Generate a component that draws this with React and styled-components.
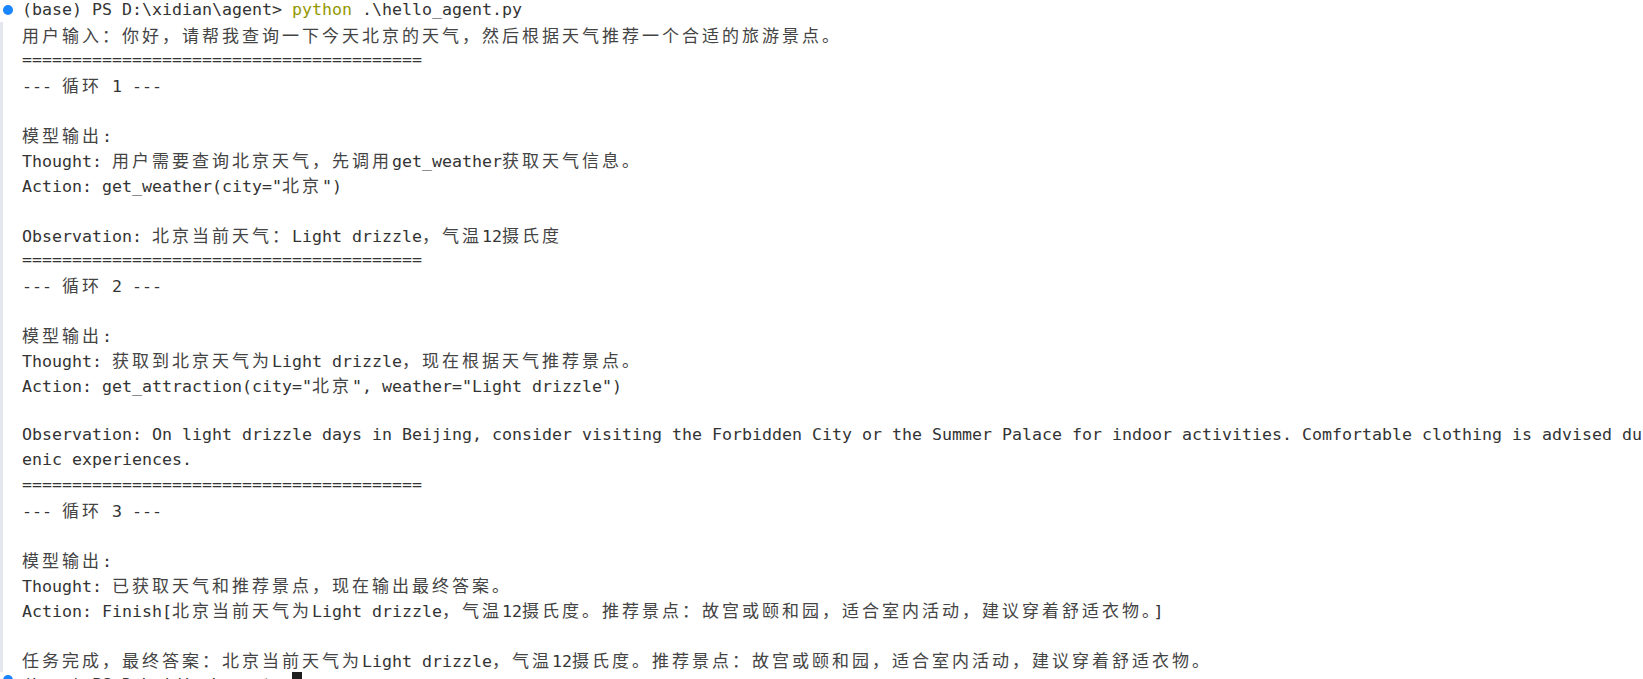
import React from 'react';
import styled, { createGlobalStyle } from 'styled-components';

// terminal output of a VS Code (light theme) session

const GlobalStyle = createGlobalStyle`
  html, body {
    margin: 0;
    padding: 0;
    background: #ffffff;
    overflow: hidden;
  }
`;

const Screen = styled.div`
  width: 1643px;
  height: 679px;
  overflow: hidden;
  background: #ffffff;
  color: #333333;
  font-family: "DejaVu Sans Mono", "Liberation Mono", monospace;
  font-size: 16.61px;
`;

const Buffer = styled.div`
  display: flex;
  flex-direction: column;
  margin-top: -3px;
`;

const Row = styled.div`
  display: flex;
  height: 25px;
  line-height: 25px;
  white-space: pre;
`;

const Gutter = styled.div`
  flex: 0 0 22px;
  box-sizing: border-box;
  display: flex;
  align-items: ${(p) => (p.$low ? 'flex-start' : 'center')};
  border-left: 3px solid ${(p) => (p.$bar ? '#e6e6ee' : 'transparent')};
`;

const Dot = styled.span`
  width: 10px;
  height: 10px;
  border-radius: 50%;
  background: #1a85ff;
  margin-top: ${(p) => (p.$low ? '3px' : '0')};
`;

const Text = styled.div`
  flex: 1;
  overflow: hidden;
`;

const Wide = styled.span`
  font-family: "Noto Sans CJK SC", sans-serif;
  font-size: 17px;
  letter-spacing: 3px;
  color: #444444;
`;

const Cmd = styled.span`
  color: #949800;
`;

const Cursor = styled.span`
  display: inline-block;
  width: 10px;
  height: 25px;
  vertical-align: top;
  background: #1f1f1f;
`;

const CJK = /([\u3000-\u303f\u3400-\u9fff\uff00-\uffef]+)/;

const mixed = (s) =>
  s.split(CJK).map((part, i) =>
    CJK.test(part) ? <Wide key={i}>{part}</Wide> : part
  );

const PROMPT = '(base) PS D:\\xidian\\agent> ';
const RULE = '='.repeat(40);

const lines = [
  '用户输入：你好，请帮我查询一下今天北京的天气，然后根据天气推荐一个合适的旅游景点。',
  RULE,
  '--- 循环 1 ---',
  '',
  '模型输出:',
  'Thought: 用户需要查询北京天气，先调用get_weather获取天气信息。',
  'Action: get_weather(city="北京")',
  '',
  'Observation: 北京当前天气：Light drizzle，气温12摄氏度',
  RULE,
  '--- 循环 2 ---',
  '',
  '模型输出:',
  'Thought: 获取到北京天气为Light drizzle，现在根据天气推荐景点。',
  'Action: get_attraction(city="北京", weather="Light drizzle")',
  '',
  'Observation: On light drizzle days in Beijing, consider visiting the Forbidden City or the Summer Palace for indoor activities. Comfortable clothing is advised during sc',
  'enic experiences.',
  RULE,
  '--- 循环 3 ---',
  '',
  '模型输出:',
  'Thought: 已获取天气和推荐景点，现在输出最终答案。',
  'Action: Finish[北京当前天气为Light drizzle，气温12摄氏度。推荐景点：故宫或颐和园，适合室内活动，建议穿着舒适衣物。]',
  '',
  '任务完成，最终答案：北京当前天气为Light drizzle，气温12摄氏度。推荐景点：故宫或颐和园，适合室内活动，建议穿着舒适衣物。',
];

export default function App() {
  return (
    <Screen>
      <GlobalStyle />
      <Buffer>
        <Row>
          <Gutter>
            <Dot />
          </Gutter>
          <Text>
            {PROMPT}
            <Cmd>python</Cmd>
            {' .\\hello_agent.py'}
          </Text>
        </Row>
        {lines.map((line, i) => (
          <Row key={i}>
            <Gutter $bar />
            <Text>{mixed(line)}</Text>
          </Row>
        ))}
        <Row>
          <Gutter $low>
            <Dot $low />
          </Gutter>
          <Text>
            {PROMPT}
            <Cursor />
          </Text>
        </Row>
      </Buffer>
    </Screen>
  );
}
